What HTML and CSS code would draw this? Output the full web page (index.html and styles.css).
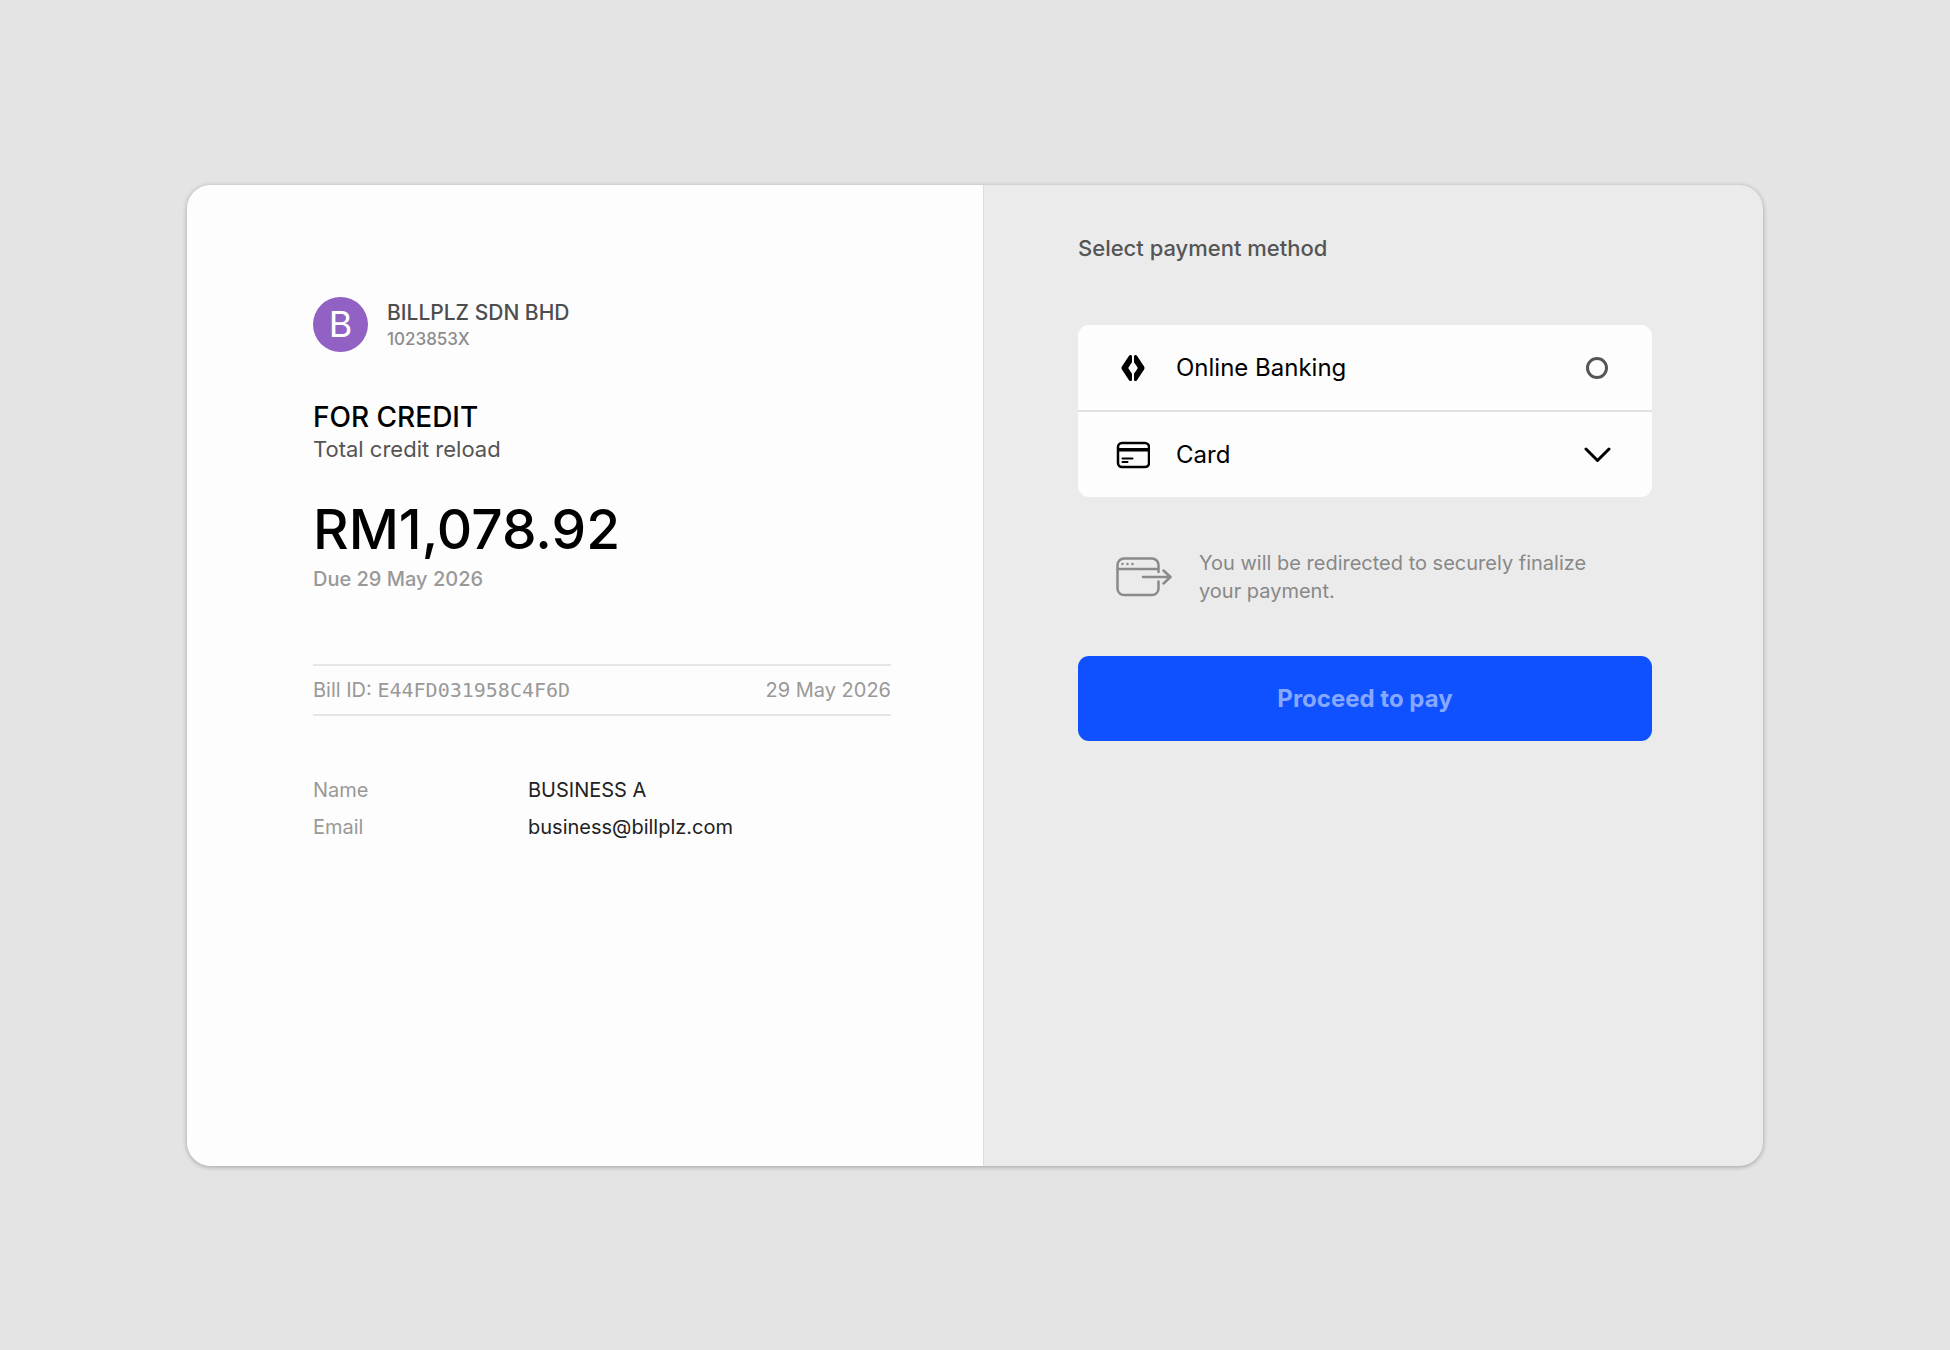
FILE: index.html
```html
<!DOCTYPE html>
<html lang="en">
<head>
  <meta charset="UTF-8" />
  <meta name="viewport" content="width=device-width, initial-scale=1" />
  <title>Billplz - Pay bill</title>
  <link rel="stylesheet" href="styles.css">
</head>
<body>
  <main class="card">
    <section class="bill">
      <div class="merchant">
        <div class="avatar">B</div>
        <div>
          <div class="merchant-name">BILLPLZ SDN BHD</div>
          <div class="merchant-reg">1023853X</div>
        </div>
      </div>

      <h1>FOR CREDIT</h1>
      <p class="description">Total credit reload</p>

      <p class="amount">RM1,078.92</p>
      <p class="due">Due 29 May 2026</p>

      <div class="bill-meta">
        <span>Bill ID: <span class="bill-id">E44FD031958C4F6D</span></span>
        <span>29 May 2026</span>
      </div>

      <dl class="payer">
        <dt>Name</dt>
        <dd>BUSINESS A</dd>
        <dt>Email</dt>
        <dd>business@billplz.com</dd>
      </dl>
    </section>

    <form class="payment">
      <h2>Select payment method</h2>

      <div class="methods">
        <label class="method" for="online-banking">
          <svg class="method-icon" viewBox="0 0 34 34" aria-hidden="true">
            <path d="M16 5.500c0-1.600-1.900-2.200-2.800-.9L5.900 15.500a2.600 2.600 0 0 0 0 3l7.300 10.900c.9 1.300 2.800.7 2.800-.9v-5.700L12.600 17.800a1.500 1.500 0 0 1 0-1.600L16 11.200z" />
            <path d="M18 5.500c0-1.600 1.900-2.200 2.800-.9l7.300 10.900a2.600 2.600 0 0 1 0 3l-7.300 10.900c-.9 1.300-2.800.7-2.800-.9v-5.700l3.400-5a1.500 1.500 0 0 0 0-1.600L18 11.200z" />
          </svg>
          <span class="method-name">Online Banking</span>
          <input type="radio" name="method" id="online-banking" value="banking" />
        </label>
        <button class="method" type="button" aria-expanded="false">
          <svg class="method-icon" viewBox="0 0 34 34" aria-hidden="true">
            <rect x="2" y="5" width="31" height="24" rx="4" fill="none" stroke="#000" stroke-width="2.500" />
            <path d="M2 10h31v3.500H2z" />
            <path d="M6.500 20.500h10M6.500 24h5" fill="none" stroke="#000" stroke-width="2" stroke-linecap="round" />
          </svg>
          <span class="method-name">Card</span>
          <svg class="chevron" viewBox="0 0 28 20" aria-hidden="true">
            <path d="M2 4 13.500 15.500 25 4" />
          </svg>
        </button>
      </div>

      <div class="notice">
        <svg class="redirect-icon" viewBox="0 0 56 40" aria-hidden="true">
          <path d="M42.500 15V8A6.500 6.500 0 0 0 36 1.500H8A6.500 6.500 0 0 0 1.500 8v23.500A6.500 6.500 0 0 0 8 38h28a6.500 6.500 0 0 0 6.500-6.500v-7M1.500 12h41M27 20h27M47.500 13.500 54.500 20l-7 6.500" />
          <path d="M6.500 7h.01M11.500 7h.01M16.500 7h.01" />
        </svg>
        <p>You will be redirected to securely finalize your payment.</p>
      </div>

      <button class="pay" type="submit" disabled>Proceed to pay</button>
    </form>
  </main>
</body>
</html>
```
FILE: styles.css
```css
* {
  box-sizing: border-box;
}

body {
  margin: 0;
  min-height: 100vh;
  padding: 185px 187px 184px;
  display: flex;
  background: #e4e4e4;
  color: #000;
  font-family: Inter, "Liberation Sans", sans-serif;
  font-size: 20px;
  line-height: 28px;
}

h1,
h2,
p,
dl,
dd {
  margin: 0;
}

.card {
  flex: 1;
  display: flex;
  border-radius: 24px;
  overflow: hidden;
  background: #ebebeb;
  box-shadow: 0 1px 5px rgba(0, 0, 0, 0.3);
}

/* left side */
.bill {
  flex: 0 0 calc(50% + 9px);
  padding: 112px 92px 60px 126px;
  background: #fdfdfd;
  border-right: 1px solid #dcdcdc;
}

.merchant {
  display: flex;
  align-items: center;
  gap: 19px;
}

.avatar {
  width: 55px;
  height: 55px;
  border-radius: 50%;
  background: #9161c4;
  color: #fff;
  font-size: 36px;
  line-height: 55px;
  text-align: center;
}

.merchant-name {
  color: #4d4d4d;
  font-size: 21px;
  font-weight: 500;
}

.merchant-reg {
  color: #8c8c8c;
  font-size: 17px;
  font-weight: 500;
  line-height: 24px;
}

h1 {
  margin-top: 47px;
  font-size: 28px;
  font-weight: 500;
  line-height: 36px;
}

.description {
  color: #555;
  font-size: 22px;
}

.amount {
  margin-top: 32px;
  font-size: 55px;
  font-weight: 500;
  line-height: 68px;
}

.due {
  margin-top: 2px;
  color: #999;
  font-weight: 500;
}

.bill-meta {
  display: flex;
  justify-content: space-between;
  margin-top: 71px;
  padding: 10px 0;
  border-top: 2px solid #e6e6e6;
  border-bottom: 2px solid #e6e6e6;
  color: #999;
}

.bill-id {
  font-family: "DejaVu Sans Mono", monospace;
}

.payer {
  display: grid;
  grid-template-columns: 215px 1fr;
  row-gap: 9px;
  margin-top: 60px;
}

.payer dt {
  color: #999;
}

.payer dd {
  color: #222;
}

/* right side */
.payment {
  flex: 1;
  padding: 49px 111px 60px 94px;
}

h2 {
  color: #555;
  font-size: 22px;
  font-weight: 500;
  line-height: 28px;
}

.methods {
  margin-top: 63px;
  border-radius: 11px;
  overflow: hidden;
  background: #fdfdfd;
}

.method {
  display: flex;
  align-items: center;
  width: 100%;
  height: 85px;
  padding: 0 40px 0 38px;
  border: none;
  background: none;
  color: #000;
  font-family: inherit;
  font-size: 24px;
  text-align: left;
  cursor: pointer;
}

.method + .method {
  height: 87px;
  border-top: 2px solid #e2e2e2;
}

.method-icon {
  width: 34px;
  height: 34px;
}

.method-name {
  flex: 1;
  margin-left: 26px;
}

.method input {
  appearance: none;
  width: 22px;
  height: 22px;
  margin: 0 4px;
  border: 3px solid #555;
  border-radius: 50%;
}

.method input:checked {
  border-width: 7px;
}

.chevron {
  width: 28px;
  height: 20px;
  fill: none;
  stroke: #000;
  stroke-width: 3;
  stroke-linecap: round;
  stroke-linejoin: round;
}

.notice {
  display: flex;
  align-items: center;
  gap: 27px;
  margin-top: 52px;
  padding: 0 38px;
  color: #888;
}

.redirect-icon {
  flex: none;
  width: 56px;
  height: 40px;
  fill: none;
  stroke: #8a8a8a;
  stroke-width: 2.5;
  stroke-linecap: round;
  stroke-linejoin: round;
}

.pay {
  display: block;
  width: 100%;
  height: 85px;
  margin-top: 51px;
  border: none;
  border-radius: 11px;
  background: #0f51ff;
  color: #87a8ff;
  font-family: inherit;
  font-size: 24px;
  font-weight: 700;
}
```
